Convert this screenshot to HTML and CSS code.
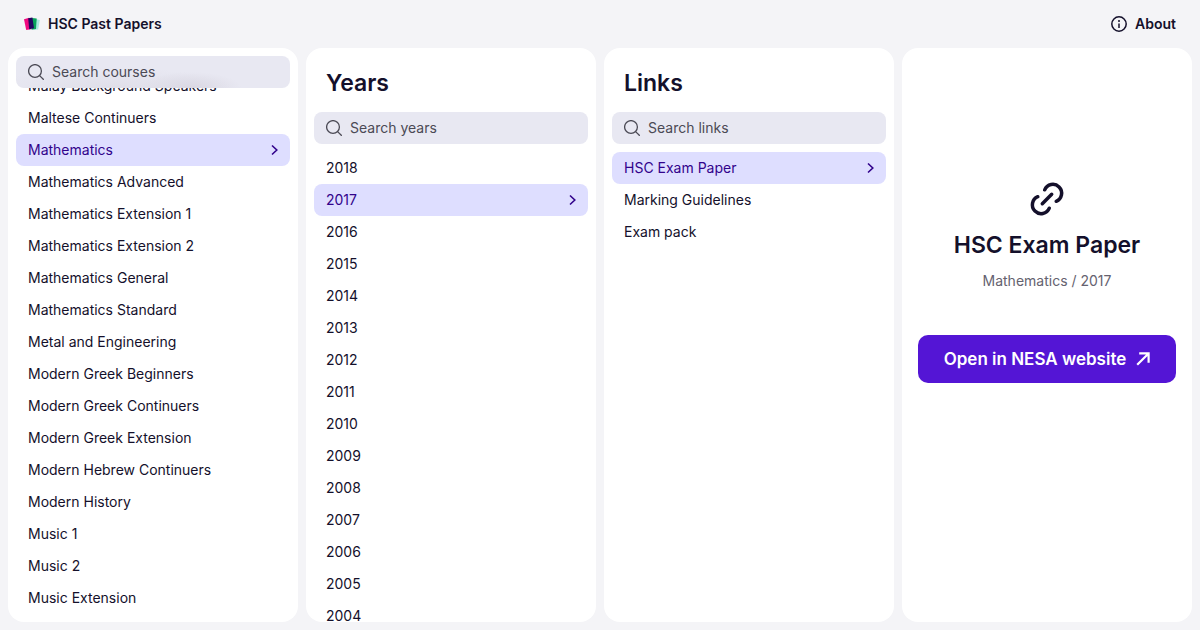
FILE: index.html
```html
<!DOCTYPE html>
<html lang="en">
<head>
<meta charset="utf-8">
<meta name="viewport" content="width=device-width, initial-scale=1">
<title>HSC Past Papers</title>
<link rel="stylesheet" href="styles.css">
</head>
<body>
<svg class="sprite" aria-hidden="true">
  <symbol id="search" viewBox="0 0 16 16"><circle cx="7" cy="7" r="6.4"/><path d="M11.6 11.6 15.8 15.8"/></symbol>
  <symbol id="chevron" viewBox="0 0 8 12"><path d="M2 1.5 6.8 6 2 10.5"/></symbol>
</svg>
<header class="topbar">
  <a class="brand" href="#">
    <svg class="logo" viewBox="0 0 16 14" aria-hidden="true">
      <path fill="#a9e8df" d="M10 1.8 15.8 3 14.2 12.5 9.5 12.8z"/>
      <path fill="#08a35c" d="M8 1 12.7 1.5 12 12 7.5 12.8z"/>
      <path fill="#f0087f" d="M0 2.2 5.2.8 7 12.2 2.2 13z"/>
      <path fill="#230560" d="M4.2 1.2 8.4.4 10 11.3 5.2 12.2z"/>
    </svg>
    <span>HSC Past Papers</span>
  </a>
  <a class="about" href="#">
    <svg class="info" viewBox="0 0 16 16" aria-hidden="true"><circle cx="8" cy="8" r="7.2"/><path d="M8 4v2M8 7.5V12"/></svg>
    <span>About</span>
  </a>
</header>
<main class="columns">
  <section class="panel" aria-label="Courses">
    <label class="search overlapping"><svg class="search-icon" aria-hidden="true"><use href="#search"/></svg><input type="search" placeholder="Search courses" aria-label="Search courses"></label>
    <ul class="list scrolled">
      <li><a class="item" href="#">Malay Background Speakers</a></li>
      <li><a class="item" href="#">Maltese Continuers</a></li>
      <li><a class="item selected" href="#" aria-current="true">Mathematics<svg class="chevron" aria-hidden="true"><use href="#chevron"/></svg></a></li>
      <li><a class="item" href="#">Mathematics Advanced</a></li>
      <li><a class="item" href="#">Mathematics Extension 1</a></li>
      <li><a class="item" href="#">Mathematics Extension 2</a></li>
      <li><a class="item" href="#">Mathematics General</a></li>
      <li><a class="item" href="#">Mathematics Standard</a></li>
      <li><a class="item" href="#">Metal and Engineering</a></li>
      <li><a class="item" href="#">Modern Greek Beginners</a></li>
      <li><a class="item" href="#">Modern Greek Continuers</a></li>
      <li><a class="item" href="#">Modern Greek Extension</a></li>
      <li><a class="item" href="#">Modern Hebrew Continuers</a></li>
      <li><a class="item" href="#">Modern History</a></li>
      <li><a class="item" href="#">Music 1</a></li>
      <li><a class="item" href="#">Music 2</a></li>
      <li><a class="item" href="#">Music Extension</a></li>
    </ul>
  </section>
  <section class="panel">
    <h2 class="title">Years</h2>
    <label class="search"><svg class="search-icon" aria-hidden="true"><use href="#search"/></svg><input type="search" placeholder="Search years" aria-label="Search years"></label>
    <ul class="list">
      <li><a class="item" href="#">2018</a></li>
      <li><a class="item selected" href="#" aria-current="true">2017<svg class="chevron" aria-hidden="true"><use href="#chevron"/></svg></a></li>
      <li><a class="item" href="#">2016</a></li>
      <li><a class="item" href="#">2015</a></li>
      <li><a class="item" href="#">2014</a></li>
      <li><a class="item" href="#">2013</a></li>
      <li><a class="item" href="#">2012</a></li>
      <li><a class="item" href="#">2011</a></li>
      <li><a class="item" href="#">2010</a></li>
      <li><a class="item" href="#">2009</a></li>
      <li><a class="item" href="#">2008</a></li>
      <li><a class="item" href="#">2007</a></li>
      <li><a class="item" href="#">2006</a></li>
      <li><a class="item" href="#">2005</a></li>
      <li><a class="item" href="#">2004</a></li>
    </ul>
  </section>
  <section class="panel">
    <h2 class="title">Links</h2>
    <label class="search"><svg class="search-icon" aria-hidden="true"><use href="#search"/></svg><input type="search" placeholder="Search links" aria-label="Search links"></label>
    <ul class="list">
      <li><a class="item selected" href="#" aria-current="true">HSC Exam Paper<svg class="chevron" aria-hidden="true"><use href="#chevron"/></svg></a></li>
      <li><a class="item" href="#">Marking Guidelines</a></li>
      <li><a class="item" href="#">Exam pack</a></li>
    </ul>
  </section>
  <section class="panel detail">
    <svg class="link-icon" viewBox="-18 -18 36 36" aria-hidden="true">
      <path d="M-2.3-9.2A8.8 8.8 0 1 1 9.2 2.3M2.3 9.2A8.8 8.8 0 1 1-9.2-2.3M-4.7 4.7 4.7-4.7"/>
    </svg>
    <h1 class="detail-title">HSC Exam Paper</h1>
    <p class="path">Mathematics / 2017</p>
    <a class="open" href="#"><span>Open in NESA website</span><svg class="arrow" viewBox="0 0 14 14" aria-hidden="true"><path d="M1.2 12.8 12.3 1.7M3.2 1.4H12.6V10.8"/></svg></a>
  </section>
</main>
</body>
</html>
```
FILE: styles.css
```css
* { box-sizing: border-box; }
body {
  margin: 0;
  height: 100vh;
  display: flex;
  flex-direction: column;
  overflow: hidden;
  background: #f4f4f7;
  color: #14102b;
  font: 14px/20px Inter, "Liberation Sans", sans-serif;
}
a { color: inherit; text-decoration: none; }
svg { flex: none; fill: none; stroke: currentColor; }
.sprite { display: none; }
.topbar {
  flex: none;
  display: flex;
  justify-content: space-between;
  align-items: center;
  height: 48px;
  padding: 0 24px;
  font-weight: 600;
}
.brand, .about { display: flex; align-items: center; gap: 8px; }
.logo { width: 16px; height: 14px; stroke: none; }
.info { width: 16px; height: 16px; stroke-width: 1.5; overflow: visible; }
.columns {
  flex: 1;
  min-height: 0;
  display: grid;
  grid-template-columns: repeat(4, minmax(0, 1fr));
  grid-template-rows: minmax(0, 1fr);
  gap: 8px;
  padding: 0 8px 8px;
}
.panel {
  padding: 8px;
  overflow: hidden;
  background: #fff;
  border-radius: 16px;
}
.title {
  margin: 0;
  padding: 11px 12px 13px;
  font-size: 23px;
  line-height: 32px;
  font-weight: 600;
}
.search {
  position: relative;
  z-index: 1;
  display: flex;
  align-items: center;
  gap: 8px;
  height: 32px;
  padding: 0 12px;
  border-radius: 8px;
  background: #e8e8f2;
  color: #4b4a55;
}
/* soft shade of the row passing beneath the search box */
.overlapping {
  background:
    radial-gradient(ellipse 50px 16px at 64% 100%, #dad8e3, transparent),
    radial-gradient(ellipse 120px 20px at 35% 100%, #e0dfe9, transparent),
    #e8e8f2;
}
.search-icon { width: 16px; height: 16px; stroke-width: 1.3; overflow: visible; }
.search input {
  flex: 1;
  min-width: 0;
  padding: 0;
  border: 0;
  outline: 0;
  background: none;
  color: inherit;
  font: inherit;
}
.search input::placeholder { color: inherit; opacity: 1; }
.list { list-style: none; margin: 8px 0 0; padding: 0; }
.scrolled { margin-top: -18px; }
.item {
  display: flex;
  align-items: center;
  justify-content: space-between;
  height: 32px;
  padding: 0 12px;
  border-radius: 8px;
}
.selected { background: #dedeff; color: #32038c; }
.chevron { width: 8px; height: 12px; stroke-width: 1.6; }
.detail {
  display: flex;
  flex-direction: column;
  align-items: center;
  justify-content: center;
  padding: 16px 16px 122px;
  text-align: center;
}
.link-icon { width: 36px; height: 36px; stroke-width: 3.5; stroke-linecap: round; }
.detail-title { margin: 12px 0 0; font-size: 23px; line-height: 32px; font-weight: 600; }
.path { margin: 10px 0 44px; color: #65626f; }
.open {
  align-self: stretch;
  display: flex;
  align-items: center;
  justify-content: center;
  gap: 10px;
  height: 48px;
  border-radius: 10px;
  background: #5415d5;
  color: #fff;
  font-size: 17px;
  line-height: 24px;
  font-weight: 600;
}
.arrow { width: 14px; height: 14px; stroke-width: 2.2; }
```
